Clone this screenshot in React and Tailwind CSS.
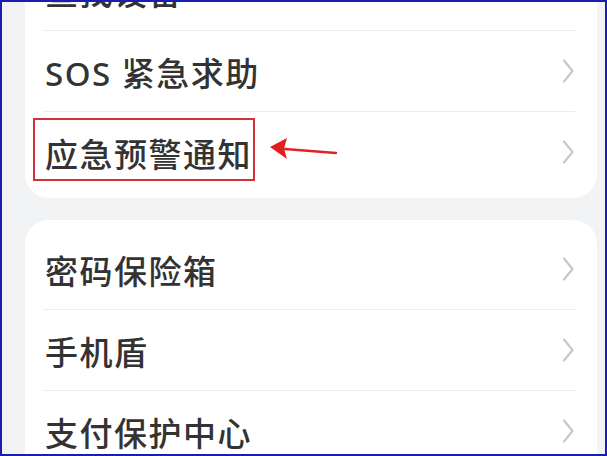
import { Fragment } from 'react';

const Chevron = () => (
  <svg width="14" height="26" viewBox="0 0 14 26" fill="none" className="shrink-0">
    <path d="M3 2.5 L11.5 13 L3 23.5" stroke="#c8c8c8" strokeWidth="2.2" strokeLinecap="round" strokeLinejoin="round" />
  </svg>
);

function Row({ label, first, children }) {
  return (
    <div className="pl-[18px] pr-[22px]">
      <div
        className={`relative h-[81px] flex items-center justify-between ${first ? '' : 'border-t border-[#ececec]'}`}
      >
        <span className="pl-[2px] pt-[5px] text-[33px] leading-none font-medium tracking-[1.5px] text-[#333]">
          {label}
        </span>
        <Chevron />
        {children}
      </div>
    </div>
  );
}

function Card({ rows, className = '' }) {
  return (
    <div className={`bg-white rounded-[24px] pt-[8px] pb-[6px] ${className}`}>
      {rows.map((r, i) => (
        <Fragment key={r.label}>
          <Row label={r.label} first={i === 0}>
            {r.extra}
          </Row>
        </Fragment>
      ))}
    </div>
  );
}

export default function App() {
  const highlight = (
    <>
      {/* red annotation box */}
      <div className="absolute left-[-10px] top-[6px] w-[222px] h-[63px] border-2 border-[#d4303a]" />
      {/* arrow */}
      <svg className="absolute left-[225px] top-[25px]" width="72" height="26" viewBox="0 0 72 26">
        <path d="M17 12 L68 16" stroke="#e02424" strokeWidth="2.4" strokeLinecap="round" />
        <path d="M2 10 L19 1 L16 11.5 L19 22 Z" fill="#e41e1e" />
      </svg>
    </>
  );

  return (
    <div
      className="w-[607px] h-[456px] overflow-hidden border-2 border-[#1c1cb4] bg-[#f2f3f5]"
      style={{ fontFamily: '"Noto Sans", "Noto Sans CJK SC", sans-serif' }}
    >
      <div className="pl-[23px] pr-[8px] -mt-[61px] flex flex-col gap-[22px]">
        <Card
          rows={[
            { label: '查找设备' },
            { label: 'SOS 紧急求助' },
            { label: '应急预警通知', extra: highlight },
          ]}
        />
        <Card
          rows={[
            { label: '密码保险箱' },
            { label: '手机盾' },
            { label: '支付保护中心' },
          ]}
        />
      </div>
    </div>
  );
}
